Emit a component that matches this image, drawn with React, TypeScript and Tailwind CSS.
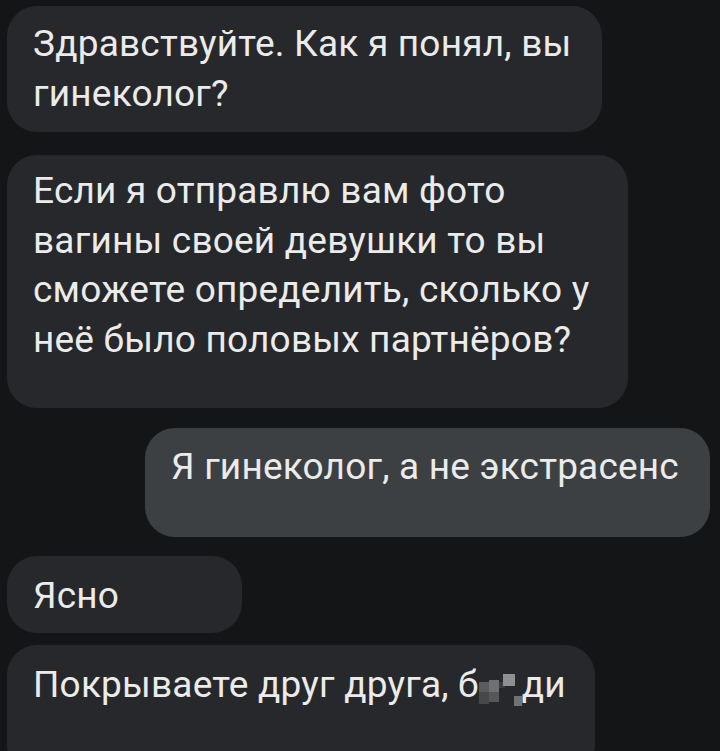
import React from "react"

interface Bubble {
  lines: React.ReactNode[]
  className: string
}

function Censor() {
  return (
    <svg width="43" height="33" viewBox="0 0 43 33" className="inline-block align-[-10px]">
      <rect x="0" y="8" width="10" height="10" fill="#5a5c5e" />
      <rect x="10" y="6" width="10" height="12" fill="#6f7173" />
      <rect x="0" y="18" width="10" height="12" fill="#46484a" />
      <rect x="10" y="18" width="10" height="10" fill="#55575a" />
      <rect x="20" y="8" width="6" height="6" fill="#3a3c3e" />
      <rect x="24" y="0" width="12" height="12" fill="#8e9092" />
      <rect x="35" y="22" width="8" height="10" fill="#707274" />
    </svg>
  )
}

const bubbles: Bubble[] = [
  {
    lines: ["Здравствуйте. Как я понял, вы", "гинеколог?"],
    className: "self-start w-[595px] h-[126px] pt-[13px] leading-[50px] bg-[#26282b]",
  },
  {
    lines: [
      "Если я отправлю вам фото",
      "вагины своей девушки то вы",
      "сможете определить, сколько у",
      "неё было половых партнёров?",
    ],
    className: "self-start w-[621px] h-[253px] mt-[23px] pt-[11px] leading-[49.5px] bg-[#26282b]",
  },
  {
    lines: ["Я гинеколог, а не экстрасенс"],
    className: "self-end w-[565px] h-[109px] mt-[20px] mr-[10px] pt-[14px] leading-[50px] bg-[#3d4043]",
  },
  {
    lines: ["Ясно"],
    className: "self-start w-[235px] h-[77px] mt-[19px] pt-[15px] leading-[50px] bg-[#26282b]",
  },
  {
    lines: [
      <>
        Покрываете друг друга, б<Censor />ди
      </>,
    ],
    className: "self-start w-[588px] h-[130px] mt-[12px] pt-[15px] leading-[50px] bg-[#26282b]",
  },
]

export default function App() {
  return (
    <div
      className="w-[720px] h-[751px] overflow-hidden bg-[#141517] pt-[6px] pl-[7px] flex flex-col text-[37px] tracking-[0.2px] text-[#ebebeb]"
      style={{ fontFamily: "Roboto, 'Noto Sans', sans-serif" }}
    >
      {bubbles.map((b, i) => (
        <div key={i} className={`shrink-0 rounded-[30px] pl-[26px] ${b.className}`}>
          {b.lines.map((line, j) => (
            <div key={j} className="whitespace-nowrap">
              {line}
            </div>
          ))}
        </div>
      ))}
    </div>
  )
}
